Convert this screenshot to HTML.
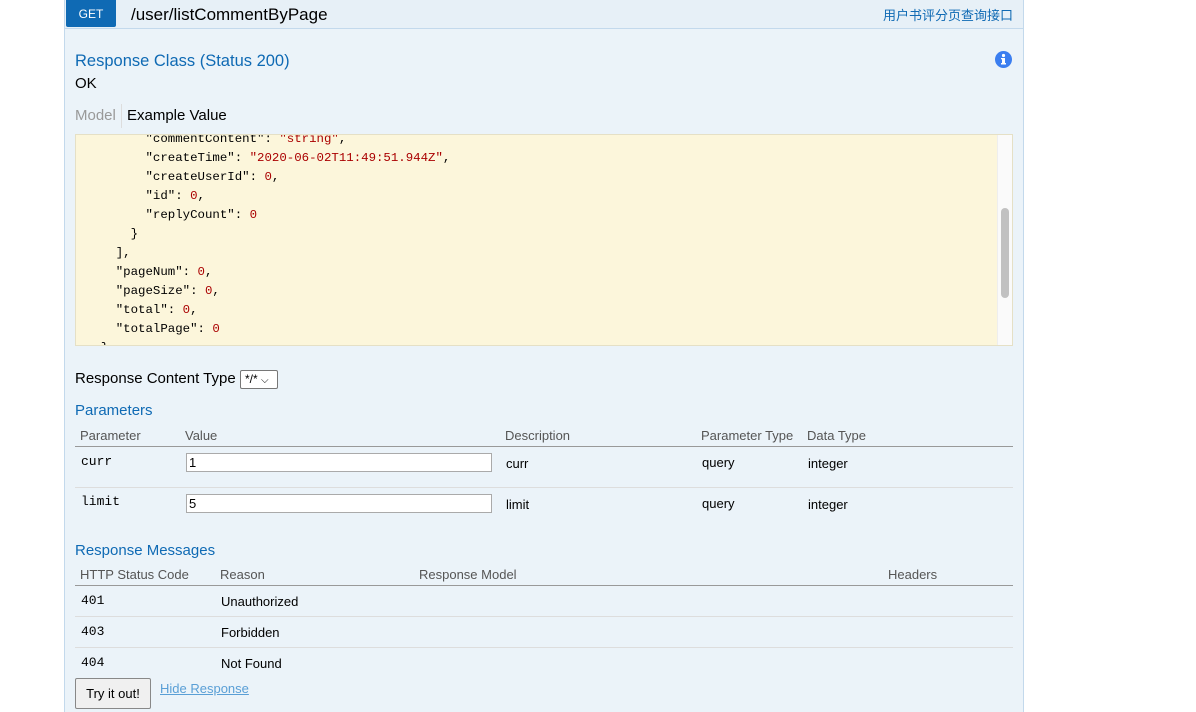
<!DOCTYPE html>
<html><head><meta charset="utf-8"><style>
body{margin:0;width:1196px;height:712px;background:#fff;font-family:"Liberation Sans","Noto Sans CJK SC",sans-serif;position:relative;overflow:hidden;color:#000}
.a{position:absolute;white-space:nowrap}
.panel{position:absolute;left:64px;top:0;width:958px;height:712px;background:#ebf3f9;border-left:1px solid #c3d9ec;border-right:1px solid #c3d9ec}
.hdr{position:absolute;left:0;top:0;width:958px;height:28px;border-bottom:1px solid #c3d9ec;background:#e7f0f7}
.get{position:absolute;left:1px;top:0;width:50px;height:27px;background:#0f6ab4;color:#fff;font-size:12px;text-align:center;line-height:29px;border-radius:0 0 2px 2px}
.blue{color:#0f6ab4}
.code{position:absolute;left:75px;top:134px;width:936px;height:210px;background:#fcf6db;border:1px solid #e5e0c6;overflow:hidden}
pre{margin:0;position:absolute;left:10px;top:-5px;font-family:"Liberation Mono",monospace;font-size:12.4px;line-height:19px;color:#000}
.s{color:#a00}.n{color:#a00}
.sb{position:absolute;right:0;top:0;width:14px;height:210px;background:#fafafa;border-left:1px solid #eee}
.th{position:absolute;font-size:13px;color:#555}
.td{position:absolute;font-size:13px;color:#000}
.mono{font-family:"Liberation Mono",monospace;font-size:13px}
.line{position:absolute;left:75px;width:938px;height:1px;background:#ddd}
input{position:absolute;border:1px solid #aaa;background:#fff;font-size:13px;padding:0 2px;box-sizing:border-box;height:19px;font-family:"Liberation Sans",sans-serif}
</style></head><body>
<div class="panel"><div class="hdr"></div><div class="get">GET</div></div>
<div class="a" style="left:131px;top:5px;font-size:17px">/user/listCommentByPage</div>
<div class="a blue" style="left:883px;top:5px;font-size:13px">用户书评分页查询接口</div>
<div class="a blue" style="left:75px;top:52px;font-size:16.5px">Response Class (Status 200)</div>
<div class="a" style="left:75px;top:75px;font-size:15px">OK</div>
<svg class="a" style="left:995px;top:51px" width="17" height="17" viewBox="0 0 17 17"><circle cx="8.5" cy="8.5" r="8.5" fill="#3b7ef0"/><circle cx="8.5" cy="4.5" r="1.6" fill="#fff"/><rect x="7" y="7" width="3" height="6.5" fill="#fff"/><rect x="6" y="12" width="5" height="1.5" fill="#fff"/><rect x="6" y="7" width="2" height="1.3" fill="#fff"/></svg>
<div class="a" style="left:75px;top:107px;font-size:15px;color:#999">Model</div>
<div class="a" style="left:121px;top:104px;width:1px;height:24px;background:#ddd"></div>
<div class="a" style="left:127px;top:107px;font-size:15px">Example Value</div>
<div class="code"><pre>        "commentContent": <span class="s">"string"</span>,
        "createTime": <span class="s">"2020-06-02T11:49:51.944Z"</span>,
        "createUserId": <span class="n">0</span>,
        "id": <span class="n">0</span>,
        "replyCount": <span class="n">0</span>
      }
    ],
    "pageNum": <span class="n">0</span>,
    "pageSize": <span class="n">0</span>,
    "total": <span class="n">0</span>,
    "totalPage": <span class="n">0</span>
  }</pre><div class="sb"><div style="position:absolute;left:3px;top:73px;width:8px;height:90px;border-radius:4px;background:#c1c1c1"></div></div></div>
<div class="a" style="left:75px;top:370px;font-size:15px">Response Content Type</div>
<div class="a" style="left:240px;top:370px;height:17px;border:1px solid #777;border-radius:2px;background:#fff;font-size:12px;line-height:17px;padding-left:4px;width:32px">*/* <span style="font-size:10px">&#x2335;</span></div>
<div class="a blue" style="left:75px;top:402px;font-size:15px">Parameters</div>
<div class="th" style="left:80px;top:428px">Parameter</div>
<div class="th" style="left:185px;top:428px">Value</div>
<div class="th" style="left:505px;top:428px">Description</div>
<div class="th" style="left:701px;top:428px">Parameter Type</div>
<div class="th" style="left:807px;top:428px">Data Type</div>
<div class="line" style="top:446px;background:#999"></div>
<div class="td mono" style="left:81px;top:454px">curr</div>
<input style="left:186px;top:453px;width:306px" value="1">
<div class="td" style="left:506px;top:456px">curr</div>
<div class="td" style="left:702px;top:455px">query</div>
<div class="td" style="left:808px;top:456px">integer</div>
<div class="line" style="top:487px"></div>
<div class="td mono" style="left:81px;top:494px">limit</div>
<input style="left:186px;top:494px;width:306px" value="5">
<div class="td" style="left:506px;top:497px">limit</div>
<div class="td" style="left:702px;top:496px">query</div>
<div class="td" style="left:808px;top:497px">integer</div>
<div class="a blue" style="left:75px;top:542px;font-size:15px">Response Messages</div>
<div class="th" style="left:80px;top:567px">HTTP Status Code</div>
<div class="th" style="left:220px;top:567px">Reason</div>
<div class="th" style="left:419px;top:567px">Response Model</div>
<div class="th" style="left:888px;top:567px">Headers</div>
<div class="line" style="top:585px;background:#999"></div>
<div class="td mono" style="left:81px;top:593px">401</div>
<div class="td" style="left:221px;top:594px">Unauthorized</div>
<div class="line" style="top:616px"></div>
<div class="td mono" style="left:81px;top:624px">403</div>
<div class="td" style="left:221px;top:625px">Forbidden</div>
<div class="line" style="top:647px"></div>
<div class="td mono" style="left:81px;top:655px">404</div>
<div class="td" style="left:221px;top:656px">Not Found</div>
<div class="a" style="left:75px;top:678px;width:74px;height:29px;border:1px solid #888;border-radius:2px;background:#f0f0f0;font-size:13px;text-align:center;line-height:29px">Try it out!</div>
<div class="a" style="left:160px;top:681px;font-size:13px;color:#5a9fd6;text-decoration:underline">Hide Response</div>
</body></html>
